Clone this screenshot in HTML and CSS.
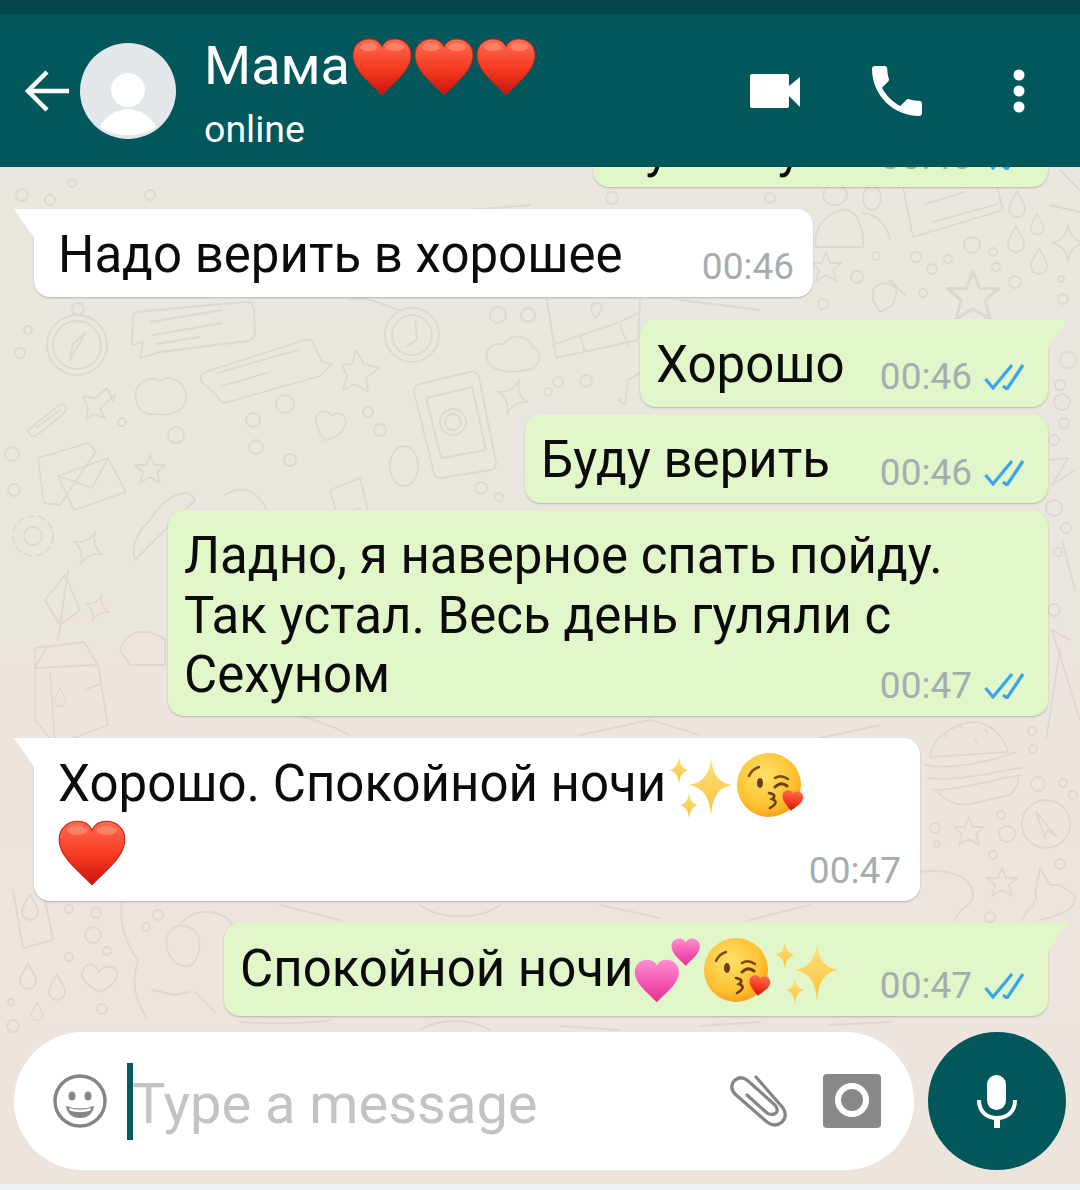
FILE: index.html
```html
<!DOCTYPE html>
<html>

<head>
  <title>Мама</title>
  <link rel="stylesheet" href="styles.css">
</head>

<body>
  <!-- shared emoji and doodle drawings -->
  <svg class="sprite" width="0" height="0">
    <defs>
      <linearGradient id="red-grad" x1="0" y1="0" x2="0" y2="1">
        <stop offset="0" stop-color="#ff6b4f" />
        <stop offset="0.55" stop-color="#f5391f" />
        <stop offset="1" stop-color="#c9150f" />
      </linearGradient>
      <linearGradient id="pink-grad" x1="0" y1="0" x2="0" y2="1">
        <stop offset="0" stop-color="#ff8fd0" />
        <stop offset="0.6" stop-color="#f44fb0" />
        <stop offset="1" stop-color="#e0358f" />
      </linearGradient>
      <radialGradient id="face-grad" cx="0.42" cy="0.35" r="0.72">
        <stop offset="0" stop-color="#ffe16a" />
        <stop offset="0.65" stop-color="#fdc233" />
        <stop offset="1" stop-color="#f59a14" />
      </radialGradient>
      <linearGradient id="star-grad" x1="0" y1="0" x2="0" y2="1">
        <stop offset="0" stop-color="#ffe27a" />
        <stop offset="1" stop-color="#f8c23c" />
      </linearGradient>
      <path id="heart-shape" d="M30 57C20 46 1 33 1 17 1 7 9 1 17 1c6 0 11 3 13 8 2-5 7-8 13-8 8 0 16 6 16 16 0 16-19 29-29 40z" />
      <path id="drop" d="M0-14C3-7 8-2 8 4 8 9 4 12 0 12S-8 9-8 4C-8-2-3-7 0-14z" />
      <path id="star" d="M0-15L4-5 15-5 7 2 10 13 0 7-10 13-7 2-15-5-4-5z" />
      <path id="spark" d="M0-18Q2-3 16 0 2 3 0 18-2 3-16 0-2-3 0-18z" />
    </defs>
    <symbol id="heart-red" viewBox="0 0 60 58">
      <use href="#heart-shape" fill="url(#red-grad)" stroke="#c5251a" stroke-width="1" />
      <ellipse cx="17" cy="9" rx="9" ry="4" fill="#ff9c86" opacity="0.55" />
      <ellipse cx="43" cy="9" rx="9" ry="4" fill="#ff9c86" opacity="0.55" />
    </symbol>
    <symbol id="hearts-pink" viewBox="0 0 66 65">
      <use href="#heart-shape" fill="url(#pink-grad)" transform="translate(0 21) scale(0.76)" />
      <use href="#heart-shape" fill="url(#pink-grad)" transform="translate(37 0) scale(0.49)" />
    </symbol>
    <symbol id="sparkles" viewBox="0 0 63 63">
      <path fill="url(#star-grad)" d="M41 1Q42 27 62 30 42 33 41 62 40 33 19 30 40 27 41 1z" />
      <path fill="url(#star-grad)" d="M9 1Q10 13 18 15 10 17 9 29 8 17 0 15 8 13 9 1z" />
      <path fill="url(#star-grad)" d="M19 38Q20 48 28 50 20 52 19 63 18 52 10 50 18 48 19 38z" />
    </symbol>
    <symbol id="kiss" viewBox="0 0 68 66">
      <circle cx="32" cy="33" r="32" fill="url(#face-grad)" />
      <path d="M12 24Q15 17 22 15M38 26Q44 22 51 27" fill="none" stroke="#7a4a12" stroke-width="2.4" stroke-linecap="round" />
      <ellipse cx="23" cy="31" rx="3" ry="5" fill="#6b3f10" />
      <path d="M38 35Q44 29 50 34" fill="none" stroke="#6b3f10" stroke-width="3" stroke-linecap="round" />
      <path d="M32 41Q41 43 35 47 43 50 33 56" fill="none" stroke="#6b3f10" stroke-width="2.6" stroke-linecap="round" />
      <use href="#heart-shape" fill="url(#red-grad)" transform="translate(46 37) rotate(8) scale(0.36)" />
    </symbol>
    <symbol id="ticks" viewBox="0 0 40 26">
      <path d="M1.500 15L9 24 28 1M19 22L23 25 39 1" fill="none" stroke="#38a6ee" stroke-width="3.200" />
    </symbol>
  </svg>

  <div class="screen">
    <div class="status-bar"></div>

    <header class="top-bar">
      <svg class="back-icon" viewBox="0 0 45 42">
        <path d="M44 21H3M22 2L3 21l19 19" fill="none" stroke="#fff" stroke-width="4.500" />
      </svg>
      <svg class="avatar" viewBox="0 0 96 96">
        <circle cx="48" cy="48" r="48" fill="#e3e7ec" />
        <circle cx="48" cy="47" r="17" fill="#fff" />
        <path d="M20 84C26 72 37 66 48 66s22 6 28 18c-8 6-18 8-28 8s-20-2-28-8z" fill="#fff" />
      </svg>
      <div class="contact">
        <div class="contact-name">Мама<svg class="name-heart">
            <use href="#heart-red" />
          </svg><svg class="name-heart">
            <use href="#heart-red" />
          </svg><svg class="name-heart">
            <use href="#heart-red" />
          </svg></div>
        <div class="contact-status">online</div>
      </div>
      <div class="top-actions">
        <svg class="video-icon" viewBox="0 0 50 34">
          <path d="M2 0h35a2 2 0 0 1 2 2v30a2 2 0 0 1-2 2H2a2 2 0 0 1-2-2V2a2 2 0 0 1 2-2z" fill="#fff" />
          <path d="M39 12L50 3v30L39 22z" fill="#fff" />
        </svg>
        <svg class="call-icon" viewBox="3 3 18 18">
          <path fill="#fff" d="M6.620 10.790c1.440 2.830 3.760 5.140 6.590 6.590l2.200-2.200c.270-.270.670-.360 1.020-.240 1.120.370 2.330.570 3.570.570.550 0 1 .450 1 1V20c0 .550-.450 1-1 1-9.390 0-17-7.610-17-17 0-.550.450-1 1-1h3.500c.550 0 1 .450 1 1 0 1.250.200 2.450.570 3.570.110.350.030.740-.250 1.020l-2.200 2.200z" />
        </svg>
        <svg class="menu-icon" viewBox="0 0 12 44">
          <circle cx="6" cy="6" r="5.500" fill="#fff" />
          <circle cx="6" cy="22" r="5.500" fill="#fff" />
          <circle cx="6" cy="38" r="5.500" fill="#fff" />
        </svg>
      </div>
    </header>

    <main class="chat">
      <!-- wallpaper doodles, coordinates are page pixels -->
      <svg class="wallpaper" viewBox="0 167 1080 1017">
        <g fill="none" stroke="#ded7d1" stroke-width="1.800" stroke-linejoin="round" stroke-linecap="round">
          <!-- compass -->
          <circle cx="77" cy="345" r="30" />
          <circle cx="77" cy="345" r="24" />
          <circle cx="78" cy="309" r="6" />
          <path d="M85 333L70 360 73 344z" />
          <!-- speech bubbles -->
          <path d="M135 312L245 302Q253 301 254 310L255 332Q255 340 247 341L160 352 140 358 143 342 132 345 133 320Q133 313 135 312z" />
          <path d="M150 322L222 310M153 335L222 323M156 344L200 337" />
          <path d="M205 372L305 340Q312 338 314 345L322 362 332 364 320 376 228 402Q220 404 218 397L201 381Q200 374 205 372z" />
          <path d="M217 373L298 350M222 386L270 372" />
          <!-- clock -->
          <circle cx="412" cy="335" r="27" />
          <circle cx="412" cy="335" r="20" />
          <path d="M415 320L417 340 407 346" />
          <!-- phone -->
          <path d="M420 384L470 372Q477 371 479 377L496 462Q497 469 491 470L441 478Q435 479 434 473L414 392Q413 386 420 384z" />
          <path d="M426 398L472 387 486 450 441 458z" />
          <circle cx="453" cy="422" r="13" />
          <circle cx="453" cy="422" r="8" />
          <!-- map, cloud, note -->
          <path d="M547 300L556 358 638 340 640 300M552 345L620 322 640 312M585 352L580 335M620 325L628 345" />
          <path d="M595 318C588 308 592 303 597 303S606 308 595 318z" />
          <path d="M487 358C484 347 497 342 503 345 510 332 530 335 533 348 543 350 541 368 528 370 510 373 490 373 487 358z" />
          <path d="M625 405L628 380 640 373M625 405C620 400 615 402 622 398" />
          <!-- left side stars, clouds, hearts -->
          <path d="M107 388L113 401 115 395 100 409 105 418 94 414 86 420 88 408 83 396 95 398z" />
          <path d="M356 350L364 364 379 368 366 378 368 392 355 384 343 390 347 376 342 365 352 364z" />
          <path d="M136 398C133 384 150 374 160 381 170 372 188 384 186 398 186 412 170 416 158 414 146 416 136 410 136 398z" />
          <path d="M318 428C310 414 325 405 332 416 340 408 350 418 344 428 340 436 330 440 325 440 321 436 319 432 318 428z" />
          <use href="#spark" transform="translate(513 397) rotate(20)" />
          <use href="#star" transform="translate(150 470)" />
          <!-- paperclip -->
          <path d="M28 430L58 406Q64 402 66 408 66 412 62 415L36 436Q30 438 28 430zM36 428L60 410" />
          <!-- envelopes -->
          <path d="M38 458L88 443 96 451 60 505 44 503z" />
          <path d="M58 476L108 458 126 492 74 510z" />
          <path d="M58 476L92 488 108 458" />
          <!-- gear, sparkle -->
          <circle cx="33" cy="536" r="9" />
          <circle cx="33" cy="536" r="20" stroke-dasharray="7 4" />
          <use href="#spark" transform="translate(88 548) rotate(25)" />
          <use href="#spark" transform="translate(97 608) rotate(20) scale(0.8)" />
          <path d="M330 490L360 478 375 540 345 545zM337 515L360 508M345 528L365 522" />
          <ellipse cx="404" cy="466" rx="14" ry="20" />
          <path d="M150 520C165 495 190 485 195 500L135 560C130 545 140 530 150 520z" />
          <path d="M225 495C250 480 265 500 270 520M120 650C128 625 155 630 165 640L165 665 130 665z" />
          <!-- cutlery -->
          <path d="M65 575L80 610 60 625 45 600zM68 570L58 640" />
          <!-- milk carton -->
          <path d="M35 648L84 642 98 665 108 725 55 745 35 720z" />
          <path d="M35 668L98 665M55 745L50 672M46 648L35 668M85 690L100 684" />
          <use href="#drop" transform="translate(60 698) scale(0.7)" />
          <!-- carton bottom left -->
          <path d="M13 890L23 948 53 940 43 890" />
          <use href="#drop" transform="translate(30 908)" />
          <!-- drops and heart, lower left -->
          <use href="#drop" transform="translate(28 977)" />
          <use href="#drop" transform="translate(57 988)" />
          <use href="#drop" transform="translate(37 1012) scale(0.7)" />
          <path d="M99 972C92 958 82 966 82 975 84 985 96 990 101 992 108 988 118 982 117 972 115 965 103 965 99 972z" />
          <!-- dog -->
          <path d="M122 903C118 925 130 950 138 960 134 975 130 990 146 1017M167 937C172 922 190 923 198 935 203 950 195 968 185 966 172 965 164 950 167 937zM180 925C195 905 225 910 232 925M152 990L175 995 190 992M195 992L215 1012" />
          <!-- burger -->
          <path d="M930 757C932 735 960 722 975 722S1005 738 1008 752zM926 765C950 770 990 762 1016 752M928 778C960 782 1000 770 1022 768M934 790C960 790 1000 778 1020 775M938 792Q950 807 970 804L1010 795Q1020 785 1018 775" />
          <path d="M945 735L947 737M960 726L962 728M985 730L987 732M975 740L977 742" />
          <!-- right side newspaper, drops -->
          <path d="M903 187L913 237 1003 210 997 187M925 204L965 192M933 222L998 204" />
          <use href="#drop" transform="translate(1017 205)" />
          <use href="#drop" transform="translate(1037 225) scale(0.8)" />
          <use href="#drop" transform="translate(1016 240)" />
          <use href="#drop" transform="translate(1039 262)" />
          <use href="#spark" transform="translate(1068 243)" />
          <use href="#star" transform="translate(973 297) scale(1.700)" />
          <use href="#star" transform="translate(826 268)" />
          <path d="M816 247C812 222 835 208 848 210 860 215 864 232 863 247zM863 213C878 214 888 228 890 240" />
          <ellipse cx="835" cy="195" rx="12" ry="10" />
          <ellipse cx="872" cy="198" rx="9" ry="12" />
          <path d="M873 290C880 280 892 282 897 290L893 305 880 312 873 300zM890 280L905 295" />
          <!-- right side, cursor, stars, cake -->
          <circle cx="1046" cy="824" r="24" />
          <path d="M1036 812L1056 836 1047 830 1045 838z" />
          <use href="#star" transform="translate(969 832)" />
          <use href="#star" transform="translate(1002 883)" />
          <path d="M920 872C945 868 972 875 973 895 972 908 960 905 955 920" />
          <path d="M1022 920C1030 905 1040 900 1035 895L1040 868 1050 885 1060 885 1075 895C1077 910 1060 915 1040 920" />
          <!-- right edge -->
          <path d="M1050 460L1068 458 1052 485 1075 470M1075 590L1062 540M1070 640L1052 630 1080 720M1060 650L1046 740" />
          <path d="M1050 205L1080 212M1060 170L1080 190" />
          <!-- other sections between bubbles -->
          <path d="M240 715C280 705 320 720 350 735M580 735L650 720 700 735M820 738L880 725" />
          <path d="M350 300C370 295 380 305 400 310M470 210L530 205M680 300L760 310" />
          <path d="M280 905L340 920M420 905C440 920 480 920 500 905M600 905L660 918M750 920L810 905" />
          <path d="M240 1022C270 1024 300 1025 330 1020M420 1030C440 1018 470 1018 490 1030M560 1026L620 1030M700 1026L760 1022M830 1025L890 1022" />
        </g>
        <!-- little circles, cx/cy/r list kept flat -->
        <g fill="none" stroke="#ded7d1" stroke-width="1.800">
          <circle cx="22" cy="195" r="6" />
          <circle cx="50" cy="200" r="5" />
          <circle cx="72" cy="183" r="4" />
          <circle cx="150" cy="195" r="5" />
          <circle cx="28" cy="330" r="4" />
          <circle cx="20" cy="353" r="5" />
          <circle cx="12" cy="454" r="7" />
          <circle cx="14" cy="490" r="6" />
          <circle cx="122" cy="422" r="4" />
          <circle cx="176" cy="435" r="8" />
          <circle cx="253" cy="420" r="7" />
          <circle cx="285" cy="404" r="9" />
          <circle cx="256" cy="447" r="7" />
          <circle cx="290" cy="460" r="6" />
          <circle cx="368" cy="412" r="5" />
          <circle cx="380" cy="430" r="6" />
          <circle cx="481" cy="488" r="6" />
          <circle cx="499" cy="497" r="4" />
          <circle cx="498" cy="315" r="8" />
          <circle cx="528" cy="315" r="7" />
          <circle cx="558" cy="382" r="5" />
          <circle cx="586" cy="381" r="6" />
          <circle cx="548" cy="392" r="4" />
          <circle cx="1068" cy="360" r="8" />
          <circle cx="1060" cy="385" r="5" />
          <circle cx="1062" cy="402" r="8" />
          <circle cx="1064" cy="423" r="5" />
          <circle cx="1054" cy="440" r="5" />
          <circle cx="1054" cy="508" r="8" />
          <circle cx="1066" cy="528" r="5" />
          <circle cx="1058" cy="552" r="4" />
          <circle cx="1054" cy="610" r="6" />
          <circle cx="612" cy="198" r="6" />
          <circle cx="770" cy="198" r="5" />
          <circle cx="876" cy="256" r="4" />
          <circle cx="916" cy="257" r="5" />
          <circle cx="932" cy="269" r="5" />
          <circle cx="948" cy="259" r="4" />
          <circle cx="972" cy="245" r="8" />
          <circle cx="993" cy="252" r="4" />
          <circle cx="996" cy="267" r="4" />
          <circle cx="1015" cy="282" r="6" />
          <circle cx="1061" cy="279" r="3" />
          <circle cx="1063" cy="299" r="5" />
          <circle cx="857" cy="277" r="6" />
          <circle cx="923" cy="293" r="4" />
          <circle cx="823" cy="304" r="5" />
          <circle cx="69" cy="909" r="4" />
          <circle cx="96" cy="913" r="5" />
          <circle cx="93" cy="935" r="8" />
          <circle cx="107" cy="951" r="4" />
          <circle cx="69" cy="957" r="4" />
          <circle cx="158" cy="915" r="5" />
          <circle cx="146" cy="927" r="4" />
          <circle cx="102" cy="1009" r="5" />
          <circle cx="11" cy="1002" r="3" />
          <circle cx="13" cy="1026" r="6" />
          <circle cx="1032" cy="731" r="4" />
          <circle cx="1033" cy="749" r="4" />
          <circle cx="1038" cy="784" r="7" />
          <circle cx="1063" cy="783" r="4" />
          <circle cx="1073" cy="795" r="4" />
          <circle cx="1001" cy="815" r="4" />
          <circle cx="1007" cy="834" r="8" />
          <circle cx="935" cy="828" r="5" />
          <circle cx="937" cy="844" r="3" />
          <circle cx="993" cy="855" r="4" />
          <circle cx="990" cy="917" r="5" />
          <circle cx="1060" cy="864" r="5" />
        </g>
      </svg>

      <div class="messages">
        <div class="bubble out clipped">
          <div class="msg-text">Ну все у</div>
          <div class="msg-meta"><span class="msg-time">00:46</span><svg class="tick-icon">
              <use href="#ticks" />
            </svg></div>
        </div>

        <div class="bubble in tail w-779">
          <div class="msg-text">Надо верить в хорошее</div>
          <div class="msg-meta"><span class="msg-time">00:46</span></div>
        </div>

        <div class="bubble out tail w-408">
          <div class="msg-text">Хорошо</div>
          <div class="msg-meta"><span class="msg-time">00:46</span><svg class="tick-icon">
              <use href="#ticks" />
            </svg></div>
        </div>

        <div class="bubble out next w-523">
          <div class="msg-text">Буду верить</div>
          <div class="msg-meta"><span class="msg-time">00:46</span><svg class="tick-icon">
              <use href="#ticks" />
            </svg></div>
        </div>

        <div class="bubble out next w-880">
          <div class="msg-text">Ладно, я наверное спать пойду.<br>Так устал. Весь день гуляли с<br>Сехуном</div>
          <div class="msg-meta"><span class="msg-time">00:47</span><svg class="tick-icon">
              <use href="#ticks" />
            </svg></div>
        </div>

        <div class="bubble in tail w-886 tall">
          <div class="msg-text">Хорошо. Спокойной ночи<svg class="emoji sparkle-emoji">
              <use href="#sparkles" />
            </svg><svg class="emoji kiss-emoji">
              <use href="#kiss" />
            </svg><br><svg class="emoji big-heart">
              <use href="#heart-red" />
            </svg></div>
          <div class="msg-meta"><span class="msg-time">00:47</span></div>
        </div>

        <div class="bubble out tail w-824 emoji-row">
          <div class="msg-text">Спокойной ночи<svg class="emoji pink-emoji">
              <use href="#hearts-pink" />
            </svg><svg class="emoji kiss-emoji">
              <use href="#kiss" />
            </svg><svg class="emoji sparkle-emoji">
              <use href="#sparkles" />
            </svg></div>
          <div class="msg-meta"><span class="msg-time">00:47</span><svg class="tick-icon">
              <use href="#ticks" />
            </svg></div>
        </div>
      </div>

      <div class="composer">
        <div class="input-pill">
          <svg class="smile-icon" viewBox="0 0 54 54">
            <circle cx="27" cy="27" r="25" fill="none" stroke="#858587" stroke-width="3.400" />
            <ellipse cx="19" cy="22" rx="3.400" ry="4.600" fill="#858587" />
            <ellipse cx="35" cy="22" rx="3.400" ry="4.600" fill="#858587" />
            <path d="M13 32Q27 37 41 32 39 44 27 44 15 44 13 32z" fill="#858587" />
            <path d="M16 34Q27 37.500 38 34L37.300 36.500Q27 39.500 16.700 36.500z" fill="#fff" />
          </svg>
          <span class="caret"></span>
          <span class="placeholder">Type a message</span>
          <svg class="clip-icon" viewBox="0 0 58 54">
            <path d="M27 3L54 34Q59 42 53 48 46 54 38 48L6 20Q0 13 5 7 11 1 18 6L46 31Q50 36 47 39 43 42 38 39L18 21" fill="none" stroke="#858587" stroke-width="3.200" stroke-linecap="round" />
          </svg>
          <svg class="camera-icon" viewBox="0 0 58 54">
            <rect width="58" height="54" rx="4" fill="#8a888a" />
            <circle cx="29" cy="26" r="14" fill="#8a888a" stroke="#fff" stroke-width="6" />
          </svg>
        </div>
        <div class="mic-button">
          <svg class="mic-icon" viewBox="0 0 40 54">
            <rect x="10" y="1" width="19" height="35" rx="9.500" fill="#fff" />
            <path d="M2 26C2 38 10 44 20 44s18-6 18-18" fill="none" stroke="#fff" stroke-width="4" />
            <path d="M17 43h6v11h-6z" fill="#fff" />
          </svg>
        </div>
      </div>
    </main>

    <div class="bottom-strip"></div>
  </div>
</body>

</html>
```

FILE: styles.css
```css
* {
  box-sizing: border-box;
}

body {
  margin: 0;
  font-family: Roboto, "Noto Sans", sans-serif;
  background-color: #eef1f6;
}

.sprite {
  position: absolute;
}

.screen {
  display: flex;
  flex-direction: column;
  height: 1190px;
  overflow: hidden;
}

.status-bar {
  height: 14px;
  flex: none;
  background-color: #03474b;
}

.bottom-strip {
  height: 6px;
  flex: none;
  background-color: #eef1f6;
}

/* header */
.top-bar {
  position: relative;
  z-index: 2;
  display: flex;
  align-items: center;
  flex: none;
  height: 153px;
  padding-left: 25px;
  padding-right: 55px;
  color: #fff;
  background-color: #02575a;
}

.back-icon {
  width: 45px;
  height: 42px;
}

.avatar {
  width: 96px;
  height: 96px;
  margin-left: 10px;
}

.contact {
  margin-top: 6px;
  margin-left: 28px;
}

.contact-name {
  display: flex;
  align-items: center;
  height: 58px;
  font-size: 54px;
}

.name-heart {
  width: 60px;
  height: 58px;
  margin-top: 2px;
  margin-left: 2px;
}

.contact-status {
  margin-top: 12px;
  font-size: 37.5px;
  line-height: 44px;
}

.top-actions {
  display: flex;
  align-items: center;
  margin-left: auto;
}

.video-icon {
  width: 50px;
  height: 34px;
}

.call-icon {
  width: 50px;
  height: 50px;
  margin-left: 72px;
}

.menu-icon {
  width: 12px;
  height: 44px;
  margin-left: 91px;
}

/* chat */
.chat {
  position: relative;
  display: flex;
  flex-direction: column;
  justify-content: flex-end;
  flex: 1;
  min-height: 0;
  overflow: hidden;
  background-image: linear-gradient(#ebe6e0, #ece5df 60%, #ede4dc);
}

.wallpaper {
  position: absolute;
  top: 0;
  left: 0;
  width: 1080px;
  height: 1017px;
}

.messages {
  position: relative;
  display: flex;
  flex-direction: column;
  padding-left: 34px;
  padding-right: 32px;
}

.bubble {
  position: relative;
  display: grid;
  margin-top: 22px;
  border-radius: 16px;
  font-size: 51px;
  line-height: 59.5px;
  color: #0b0b0b;
  box-shadow: 0 1px 2px rgba(0, 0, 0, 0.22);
}

.bubble.next {
  margin-top: 7px;
}

.in {
  align-self: flex-start;
  padding: 16px 19px 9px 24px;
  background-color: #fff;
}

.out {
  align-self: flex-end;
  padding: 16px 24px 9px 16px;
  background-color: #e1f7c9;
}

.tail.in {
  border-top-left-radius: 0;
}

.tail.out {
  border-top-right-radius: 0;
}

.tail::before {
  content: "";
  position: absolute;
  top: 0;
  width: 21px;
  height: 30px;
  background-color: inherit;
}

.tail.in::before {
  left: -20px;
  clip-path: polygon(0 0, 100% 0, 100% 100%);
}

.tail.out::before {
  right: -20px;
  clip-path: polygon(0 0, 100% 0, 0 100%);
}

.clipped {
  width: 455px;
}

.w-779 {
  width: 779px;
  height: 88px;
}

.w-408 {
  width: 408px;
  height: 88px;
}

.w-523 {
  width: 523px;
  height: 89px;
}

.w-880 {
  width: 880px;
  height: 206px;
}

.w-886 {
  width: 886px;
  height: 163px;
}

.w-824 {
  width: 824px;
  height: 93px;
}

.msg-text,
.msg-meta {
  grid-area: 1 / 1;
}

.msg-meta {
  display: flex;
  align-items: center;
  justify-self: end;
  align-self: end;
}

.msg-time {
  font-size: 37px;
  line-height: 42px;
  color: #a5adaf;
}

.tick-icon {
  width: 40px;
  height: 26px;
  margin-left: 12px;
}

.emoji {
  margin-top: -14px;
  margin-bottom: -14px;
  vertical-align: -3px;
}

.sparkle-emoji {
  width: 63px;
  height: 63px;
  margin-left: 4px;
}

.kiss-emoji {
  width: 68px;
  height: 66px;
  margin-left: 4px;
}

.big-heart {
  width: 68px;
  height: 66px;
  vertical-align: -11px;
}

.pink-emoji {
  width: 66px;
  height: 65px;
}

/* input row */
.composer {
  position: relative;
  display: flex;
  align-items: center;
  flex: none;
  margin-top: 16px;
  margin-bottom: 14px;
  padding-left: 14px;
}

.input-pill {
  display: flex;
  align-items: center;
  width: 900px;
  height: 138px;
  padding-left: 39px;
  padding-right: 33px;
  border-radius: 69px;
  background-color: #fff;
}

.smile-icon {
  width: 54px;
  height: 54px;
}

.caret {
  width: 6px;
  height: 77px;
  margin-left: 20px;
  background-color: #065a5c;
}

.placeholder {
  flex: 1;
  margin-top: 5px;
  margin-left: -1px;
  font-size: 56px;
  color: #c6c2c3;
}

.clip-icon {
  width: 58px;
  height: 54px;
}

.camera-icon {
  width: 58px;
  height: 54px;
  margin-left: 36px;
}

.mic-button {
  display: flex;
  align-items: center;
  justify-content: center;
  width: 138px;
  height: 138px;
  margin-left: 14px;
  border-radius: 50%;
  background-color: #02575a;
}

.mic-icon {
  width: 40px;
  height: 54px;
}
```
